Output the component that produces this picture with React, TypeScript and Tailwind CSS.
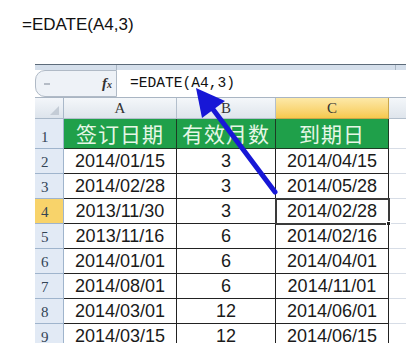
import React from 'react';

const rows = [
  ['2014/01/15', '3', '2014/04/15'],
  ['2014/02/28', '3', '2014/05/28'],
  ['2013/11/30', '3', '2014/02/28'],
  ['2013/11/16', '6', '2014/02/16'],
  ['2014/01/01', '6', '2014/04/01'],
  ['2014/08/01', '6', '2014/11/01'],
  ['2014/03/01', '12', '2014/06/01'],
  ['2014/03/15', '12', '2014/06/15'],
];

const heads = ['签订日期', '有效月数', '到期日'];

function RowNum({ n, active }: { n: number; active?: boolean }) {
  return (
    <div
      className={`flex items-end pl-[6px] pb-[1px] border-r border-b border-[#9fb4cc] font-['Liberation_Serif'] text-[15px] leading-[20px] text-[#334455] ${
        active ? 'bg-[#f8d36a]' : 'bg-[#e2eaf5]'
      }`}
    >
      {n}
    </div>
  );
}

export default function App() {
  return (
    <div className="relative w-[406px] h-[343px] overflow-hidden bg-white font-['Liberation_Sans',sans-serif]">
      <div className="pl-[22px] pt-[13px] text-[17px] leading-[24px] text-[#111]">=EDATE(A4,3)</div>

      <div className="ml-[35px] mt-[27px]">
        {/* ribbon strip */}
        <div className="flex h-[6px] border-t border-[#5d6b7a] bg-[#d5dfeb]">
          <div className="w-[82px] border-r border-[#aab6c4]" />
          <div className="w-[279px] border-r border-[#aab6c4]" />
        </div>

        {/* formula bar */}
        <div className="flex h-[28px] border-b border-[#a9b5c3]">
          <div className="relative flex w-[82px] items-center justify-end rounded-l-[10px] border border-[#b0bac6] bg-[#eef2f7] pr-[4px]">
            <div className="absolute left-[8px] top-[12px] h-[2px] w-[6px] bg-[#b5bcc6]" />
            <span className="font-['Liberation_Serif'] text-[15px] font-bold italic text-[#333]">
              f<span className="text-[10px]">x</span>
            </span>
          </div>
          <div className="flex flex-1 items-center bg-white pl-[13px] font-['Liberation_Mono'] text-[14.6px] text-[#111]">
            =EDATE(A4,3)
          </div>
        </div>

        {/* grid */}
        <div className="grid grid-cols-[29px_113px_99px_113px_1fr] grid-rows-[21px_30px_repeat(8,25px)]">
          <div className="relative border-r border-b border-[#a9b8c9] bg-gradient-to-b from-[#f3f6fa] to-[#dde4ec]">
            <div className="absolute right-[4px] bottom-[3px] h-0 w-0 border-l-[9px] border-t-[9px] border-l-transparent border-t-transparent border-b-0 border-r-0" />
            <div className="absolute right-[4px] bottom-[3px] h-[9px] w-[9px] bg-[#c4ccd6] [clip-path:polygon(100%_0,100%_100%,0_100%)]" />
          </div>
          {['A', 'B'].map((c) => (
            <div
              key={c}
              className="flex items-center justify-center border-r border-b border-[#b3bfcc] bg-gradient-to-b from-[#f4f7fa] to-[#dfe5ec] font-['Liberation_Serif'] text-[15px] text-[#333]"
            >
              {c}
            </div>
          ))}
          <div className="flex items-center justify-center border-r border-b border-[#c9a64a] bg-gradient-to-b from-[#fde9a8] to-[#f6c94c] font-['Liberation_Serif'] text-[15px] text-[#333]">
            C
          </div>
          <div className="border-b border-[#b3bfcc] bg-gradient-to-b from-[#f4f7fa] to-[#dfe5ec]" />

          {/* row 1 */}
          <RowNum n={1} />
          {heads.map((h) => (
            <div
              key={h}
              className="flex items-center justify-center border-r border-b border-[#1d3b24] bg-[#1fa04a] font-['Noto_Sans_CJK_SC',sans-serif] text-[21px] tracking-[1px] text-[#e6f7e6]"
            >
              {h}
            </div>
          ))}
          <div className="border-b border-[#d7dde6]" />

          {rows.map((r, i) => (
            <React.Fragment key={i}>
              <RowNum n={i + 2} active={i === 2} />
              {r.map((v, j) => {
                const sel = i === 2 && j === 2;
                return (
                  <div
                    key={j}
                    className={`relative flex items-center justify-center border-r border-b border-[#222] text-[18px] text-[#1a1a1a] ${
                      sel ? 'outline-2 -outline-offset-1 outline-[#3a3a3a]' : ''
                    }`}
                  >
                    {v}
                    {sel && (
                      <div className="absolute -right-[3px] -bottom-[3px] h-[5px] w-[5px] border border-white bg-[#222]" />
                    )}
                  </div>
                );
              })}
              <div className="border-b border-[#d7dde6]" />
            </React.Fragment>
          ))}
        </div>
      </div>

      {/* annotation arrow */}
      <svg className="pointer-events-none absolute left-0 top-0" width="406" height="343">
        <line x1="275" y1="192" x2="209" y2="104" stroke="#1717d6" strokeWidth="5" strokeLinecap="round" />
        <polygon points="196,88 225,101 202,118" fill="#1717d6" />
      </svg>
    </div>
  );
}
